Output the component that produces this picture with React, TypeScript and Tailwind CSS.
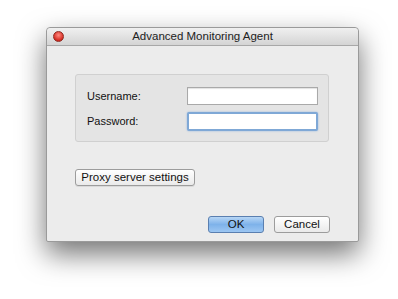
import React from "react";

export default function App() {
  return (
    <div
      className="w-[398px] h-[299px] bg-white pt-[27px] pl-[46px]"
      style={{ fontFamily: '"Liberation Sans", Arial, sans-serif' }}
    >
      <div className="w-[313px] h-[215px] bg-[#ececec] rounded-t-[4px] rounded-b-[2px] border border-[#9a9a9a] shadow-[0_12px_28px_rgba(0,0,0,0.55)] flex flex-col">
        <div className="h-[18px] shrink-0 rounded-t-[4px] bg-gradient-to-b from-[#f0f0f0] to-[#d4d4d4] border-b border-[#a8a8a8] flex items-center relative">
          <div className="absolute left-[6px] top-[3px] w-[11px] h-[11px] rounded-full bg-[radial-gradient(circle_at_50%_35%,#ff8a80,#d42a20_70%,#9a1a12)] border border-[#8f2a22]" />
          <div className="w-full text-center text-[11.5px] text-[#222] leading-none">Advanced Monitoring Agent</div>
        </div>
        <div className="flex-1 flex flex-col pl-[28px] pt-[28px]">
          <div className="w-[254px] h-[68px] bg-[#e4e4e4] border border-[#d0d0d0] rounded-[3px] pl-[11px] pr-[10px] pt-[12px] flex flex-col gap-[7px]">
            <div className="flex items-center justify-between h-[18px]">
              <span className="text-[11px] text-[#111]">Username:</span>
              <div className="w-[131px] h-[18px] bg-white border border-[#a9a9a9] shadow-[inset_0_1px_1px_rgba(0,0,0,0.12)]" />
            </div>
            <div className="flex items-center justify-between h-[19px]">
              <span className="text-[11px] text-[#111]">Password:</span>
              <div className="w-[131px] h-[19px] bg-white border-2 border-[#7fa8d6] rounded-[2px] shadow-[0_0_2px_#8fb4e0]" />
            </div>
          </div>
          <div className="mt-[22px]">
            <button className="w-[120px] h-[17px] bg-gradient-to-b from-white to-[#eaeaea] border border-[#9c9c9c] rounded-[3px] text-[11.5px] text-[#111] leading-none shadow-[0_1px_0_rgba(0,0,0,0.08)]">
              Proxy server settings
            </button>
          </div>
          <div className="mt-[28px] flex justify-end gap-[10px] pr-[28px]">
            <button className="w-[56px] h-[17px] bg-gradient-to-b from-[#b7d6f5] via-[#7eb2ea] to-[#9cc6f2] border border-[#5a7fb0] rounded-[3px] text-[11.5px] text-[#111] leading-none">
              OK
            </button>
            <button className="w-[56px] h-[17px] bg-gradient-to-b from-white to-[#eaeaea] border border-[#9c9c9c] rounded-[3px] text-[11.5px] text-[#111] leading-none">
              Cancel
            </button>
          </div>
        </div>
      </div>
    </div>
  );
}
